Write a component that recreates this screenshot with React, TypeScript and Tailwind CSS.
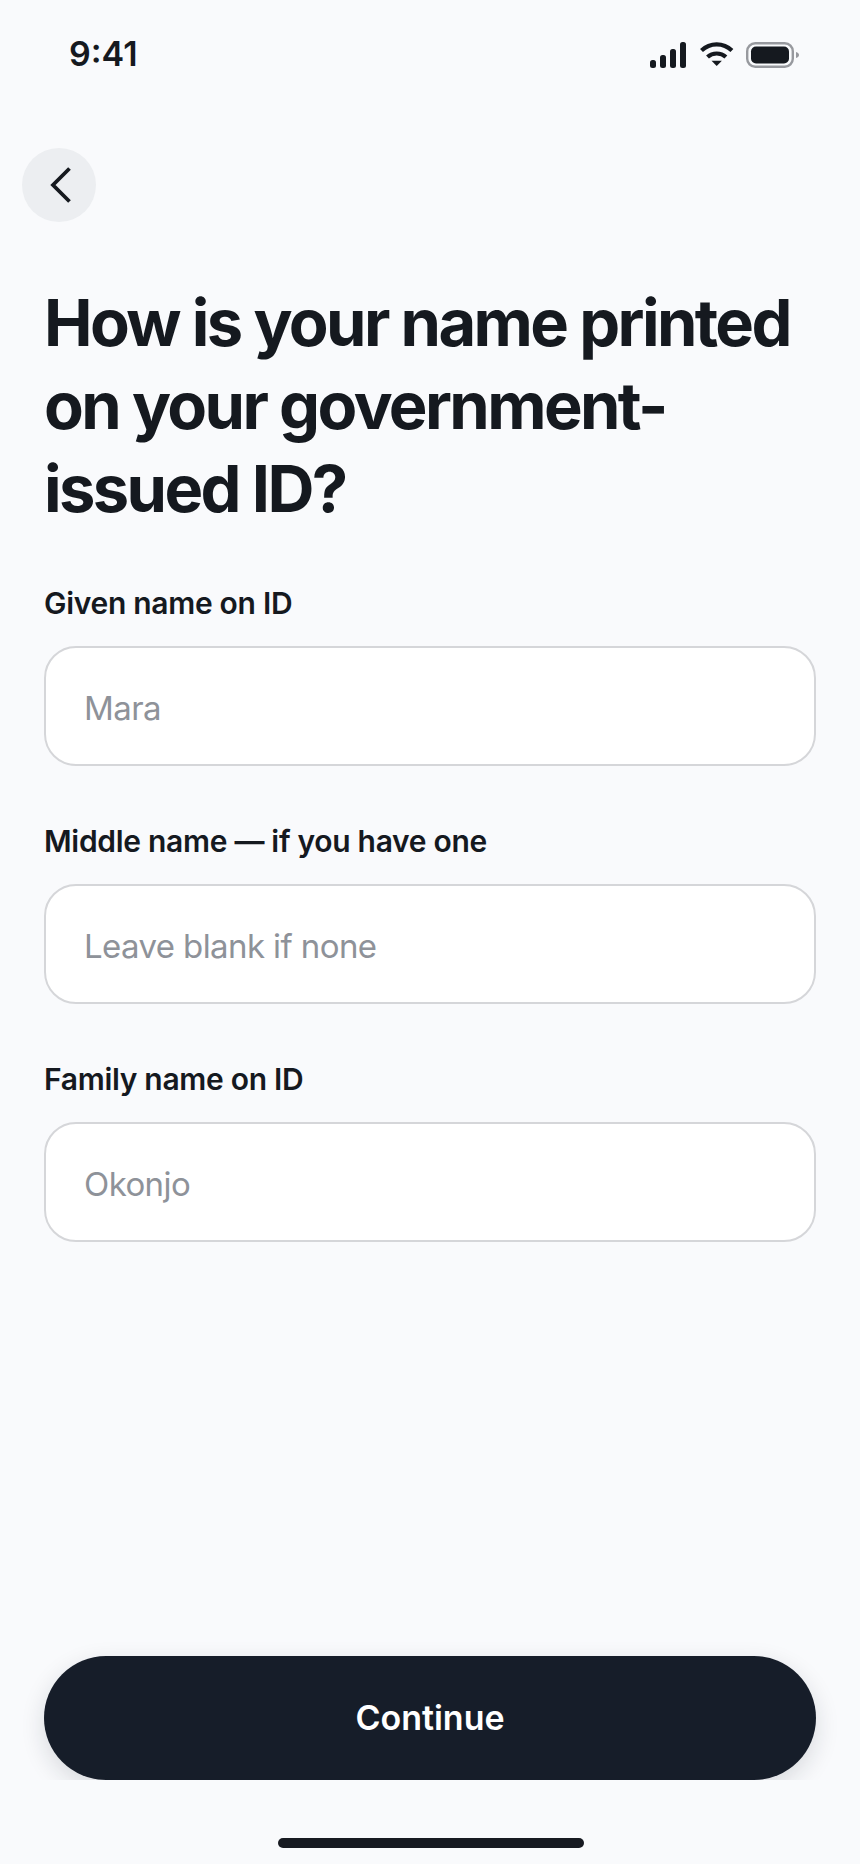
import React from "react";

const font = { fontFamily: "Inter, 'Liberation Sans', sans-serif" };

function Field({ label, value, top }: { label: string; value: string; top: string }) {
  return (
    <div className={`flex flex-col ${top}`}>
      <div className="text-[30px] leading-[40px] font-semibold text-[#15191f] tracking-[-0.3px]">{label}</div>
      <div className="mt-[23px] h-[120px] rounded-[32px] border-2 border-[#d5d6d9] bg-white flex items-center px-[38px]">
        <span className="text-[33px] leading-[44px] tracking-[-0.6px] pt-[3px] text-[#8e9299]">{value}</span>
      </div>
    </div>
  );
}

export default function App() {
  return (
    <div className="w-[860px] h-[1864px] bg-[#f9fafc] flex flex-col overflow-hidden" style={font}>
      <div className="h-[108px] pl-[69px] pr-[60px] pt-[34px] flex items-start justify-between">
        <span className="text-[34px] leading-[40px] font-semibold text-[#15191f]">9:41</span>
        <svg width="150" height="32" viewBox="0 0 150 32" className="mt-[6px]">
          <g fill="#15191f">
            <rect x="0" y="20" width="6" height="8" rx="2.5" />
            <rect x="10" y="15" width="6" height="13" rx="2.5" />
            <rect x="20" y="9" width="6" height="19" rx="2.5" />
            <rect x="30" y="2" width="6" height="26" rx="2.5" />
            <path d="M61.500 20.700h10.400L66.700 26z" />
          </g>
          <g fill="none" stroke="#15191f" strokeWidth="4.200">
            <path d="M51.500 10.500C60 2.300 73.400 2.300 81.900 10.500" />
            <path d="M57.500 17C62.600 12.300 70.800 12.300 75.900 17" />
          </g>
          <rect x="97.200" y="3.200" width="45.600" height="23.600" rx="8" fill="none" stroke="#97999e" strokeWidth="2.400" />
          <rect x="101" y="6.500" width="38" height="17" rx="5" fill="#15191f" />
          <path d="M146 12c2 .6 3 1.600 3 3s-1 2.400-3 3z" fill="#97999e" />
        </svg>
      </div>

      <div className="pl-[22px] mt-[40px]">
        <div className="w-[74px] h-[74px] rounded-full bg-[#eceef1] flex items-center justify-center">
          <svg width="24" height="38" viewBox="0 0 24 38" fill="none" className="ml-[3px]">
            <path d="M20.500 2.500L4 19L20.500 35.500" stroke="#15191f" strokeWidth="3.800" />
          </svg>
        </div>
      </div>

      <div className="px-[44px] flex flex-col flex-1">
        <h1 className="mt-[59px] text-[65px] leading-[83px] font-bold tracking-[-2.6px] text-[#15191f]">
          How is your name printed
          <br />
          on your government-
          <br />
          issued ID?
        </h1>
        <Field label="Given name on ID" value="Mara" top="mt-[53px]" />
        <Field label="Middle name — if you have one" value="Leave blank if none" top="mt-[55px]" />
        <Field label="Family name on ID" value="Okonjo" top="mt-[55px]" />
      </div>

      <div className="overflow-hidden px-[44px] pt-[40px] -mt-[40px]">
        <div className="h-[124px] rounded-[62px] bg-[#161d29] flex items-center justify-center shadow-[0_8px_24px_rgba(22,29,41,0.14)]">
          <span className="text-[34px] leading-[44px] font-semibold text-white">Continue</span>
        </div>
      </div>

      <div className="h-[84px] flex justify-center pt-[58px] pl-[2px]">
        <div className="w-[306px] h-[10px] rounded-full bg-[#171a21]" />
      </div>
    </div>
  );
}
